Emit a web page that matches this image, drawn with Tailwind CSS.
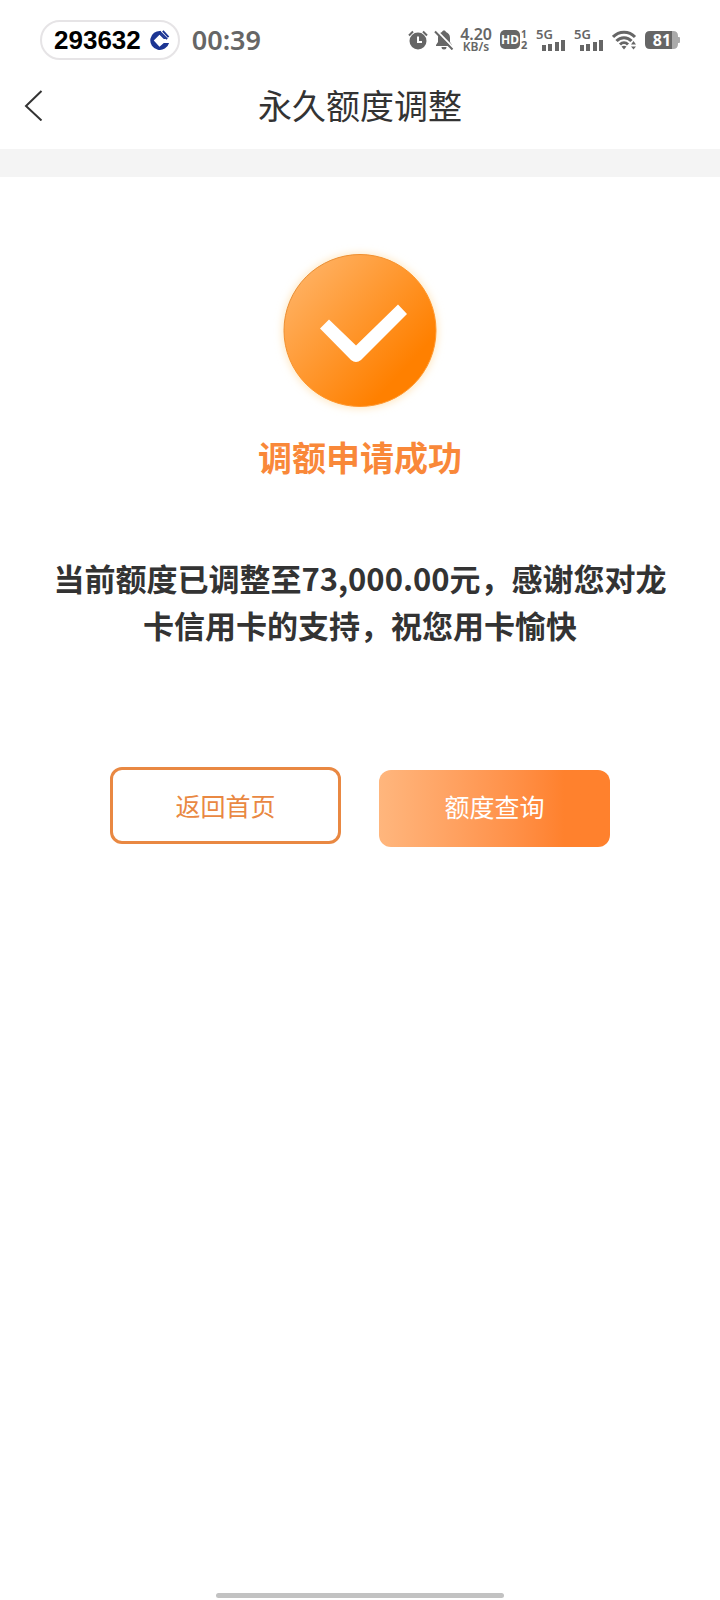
<!DOCTYPE html>
<html lang="zh-CN">
<head>
<meta charset="utf-8">
<meta name="viewport" content="width=device-width, initial-scale=1">
<title>永久额度调整</title>
<script src="https://cdn.jsdelivr.net/npm/@tailwindcss/browser@4"></script>
</head>
<body class="flex min-h-screen flex-col bg-white font-['Noto_Sans_CJK_SC',sans-serif] text-[#333333]">
  <div class="flex h-20 items-center pl-10 pr-10 text-[#666666]">
    <div class="flex h-10 items-center gap-2 rounded-full border-2 border-[#e6e4e6] pl-3 pr-2">
      <span class="font-['Liberation_Sans',sans-serif] text-[26px] leading-9 font-bold text-black">293632</span>
      <svg class="size-[21px]" viewBox="0 0 22 22" aria-hidden="true">
        <path d="M12.500 1A10 10 0 1 0 21 13.500h-5.500L11 17.500 5 11l6-6 4.500 4.500H18L12.500 4Z" fill="#1c3593"/>
        <path d="M11 1.500l8 8M14.500 1l6 6.500" stroke="#1c3593" stroke-width="2"/>
        <path d="M11 6l5 5-5 5-5-5Z" fill="#fff"/>
      </svg>
    </div>
    <span class="ml-3 font-['Noto_Sans',sans-serif] text-[27px] leading-8 font-semibold">00:39</span>
    <div class="ml-auto flex items-center font-['Noto_Sans',sans-serif]">
      <svg class="h-5 w-5" viewBox="0 0 20 20" aria-hidden="true">
        <circle cx="10" cy="11" r="8.500" fill="#666"/>
        <path d="M1 5.500L5 1.500M19 5.500l-4-4" stroke="#666" stroke-width="2"/>
        <path d="M10 6.500V12h4" fill="none" stroke="#fff" stroke-width="2"/>
      </svg>
      <svg class="ml-1.5 h-5 w-5" viewBox="0 0 20 20" aria-hidden="true">
        <path d="M10 0.500c-1 0-1.800.7-2 1.600C5 3 4 5.500 4 8v4l-2 3v1h16v-1l-2-3V8c0-3-1.500-5-4-5.900C11.800 1.200 11 .5 10 .5ZM7.500 17a2.500 2.500 0 0 0 5 0Z" fill="#666"/>
        <path d="M2.500 .500l17 17.500" stroke="#fff" stroke-width="2"/>
        <path d="M1 1.500l17.500 18" stroke="#666" stroke-width="2"/>
      </svg>
      <div class="ml-1.5 flex flex-col items-center text-center font-semibold">
        <span class="text-[16px] leading-[14px]">4.20</span>
        <span class="text-[12px] leading-3">KB/s</span>
      </div>
      <svg class="ml-2 h-6 w-[30px]" viewBox="0 0 30 24" font-family="Noto Sans" font-weight="700" fill="#666" role="img" aria-label="HD">
        <rect x="0" y="2" width="20" height="19" rx="5"/>
        <text x="10" y="16" font-size="12" text-anchor="middle" fill="#fff">HD</text>
        <text x="21" y="10" font-size="10">1</text>
        <text x="21" y="21" font-size="11">2</text>
      </svg>
      <svg class="ml-1.5 h-7 w-[30px]" viewBox="0 0 30 28" font-family="Noto Sans" font-weight="600" fill="#666">
        <text x="0" y="13" font-size="13">5G</text>
        <path d="M6 19h4v6H6zM12 18h4v7h-4zM19 16h4v9h-4zM25 14h4v11h-4z"/>
      </svg>
      <svg class="ml-2 h-7 w-[30px]" viewBox="0 0 30 28" font-family="Noto Sans" font-weight="600" fill="#666">
        <text x="0" y="13" font-size="13">5G</text>
        <path d="M6 19h4v6H6zM12 18h4v7h-4zM19 16h4v9h-4zM25 14h4v11h-4z"/>
      </svg>
      <svg class="ml-2 h-5 w-[25px]" viewBox="0 0 25 20" aria-hidden="true">
        <path d="M1 7C7 .500 17 .500 23 7M4.500 11c4-4.500 11-4.500 15 0M8 14.500c2.500-2.500 5.500-2.500 8 0" fill="none" stroke="#666" stroke-width="3"/>
        <path d="M9.500 16.500q2.500-1.500 5 0L12 19.500ZM19 14.500l2.500-3.500L24 14.500ZM19 16.500l2.500 3 2.500-3Z" fill="#666"/>
      </svg>
      <svg class="ml-2 h-6 w-[35px]" viewBox="0 0 35 24" font-family="Noto Sans" font-weight="700">
        <path d="M26 3h2q5 0 5 5v1h1q1 0 1 1v4q0 1-1 1h-1v1q0 5-5 5h-2Z" fill="#aaa"/>
        <path d="M5 3h22v18H5q-5 0-5-5V8q0-5 5-5Z" fill="#666"/>
        <text x="17" y="18" font-size="16" text-anchor="middle" fill="#fff">81</text>
      </svg>
    </div>
  </div>

  <header class="grid h-[69px] grid-cols-[64px_1fr_64px] pb-5">
    <button type="button" aria-label="返回" class="flex items-center pl-6">
      <svg class="h-8 w-5" viewBox="0 0 20 32" fill="none" stroke="#333" stroke-width="2" aria-hidden="true"><path d="M17.500 2L2 17l15.500 14.500"/></svg>
    </button>
    <h1 class="self-center text-center text-[34px] leading-[50px] font-normal">永久额度调整</h1>
  </header>
  <div class="h-7 bg-[#f4f4f4]"></div>

  <main class="flex flex-col items-center px-10 pt-[77px]">
    <svg class="size-[152px] overflow-visible" viewBox="0 0 152 152" aria-hidden="true">
      <defs>
        <linearGradient id="disc" x1="0.1" y1="0.2" x2="0.75" y2="0.8">
          <stop offset="0" stop-color="#ffae5c"/>
          <stop offset="1" stop-color="#ff8000"/>
        </linearGradient>
        <linearGradient id="rim" x1="0" y1="0" x2="1" y2="1">
          <stop offset="0" stop-color="#dd8a3a"/>
          <stop offset="0.5" stop-color="#ff9326"/>
          <stop offset="1" stop-color="#ff9a35"/>
        </linearGradient>
        <filter id="glow" x="-20%" y="-20%" width="140%" height="140%"><feGaussianBlur stdDeviation="4"/></filter>
      </defs>
      <circle cx="76" cy="77" r="77" fill="#ffe4b8" filter="url(#glow)"/>
      <circle cx="76" cy="76.500" r="76" fill="url(#disc)" stroke="url(#rim)" stroke-width="1"/>
      <path d="M36 74.500l9-9 27 26 42-41 9 9.500-46 46q-5 4-10 0Z" fill="#fff"/>
    </svg>
    <h2 class="mt-[26px] text-[34px] leading-[50px] font-bold text-[#f98839]">调额申请成功</h2>
    <p class="mt-[72px] text-center text-[31px] leading-[47px] font-bold">当前额度已调整至73,000.00元，感谢您对龙卡信用卡的支持，祝您用卡愉快</p>
    <div class="mt-[119px] flex items-start justify-center gap-[38px]">
      <button type="button" class="h-[77px] w-[231px] rounded-xl border-3 border-[#e98842] text-[25px] text-[#e98842]">返回首页</button>
      <button type="button" class="mt-[3px] h-[77px] w-[231px] rounded-xl bg-linear-to-r from-[#ffb67d] to-[#ff812d] to-80% pb-1 text-[25px] text-white">额度查询</button>
    </div>
  </main>
  <div class="mx-auto mt-auto mb-0.5 h-[5px] w-72 rounded-full bg-[#c2c2c2]"></div>
</body>
</html>
